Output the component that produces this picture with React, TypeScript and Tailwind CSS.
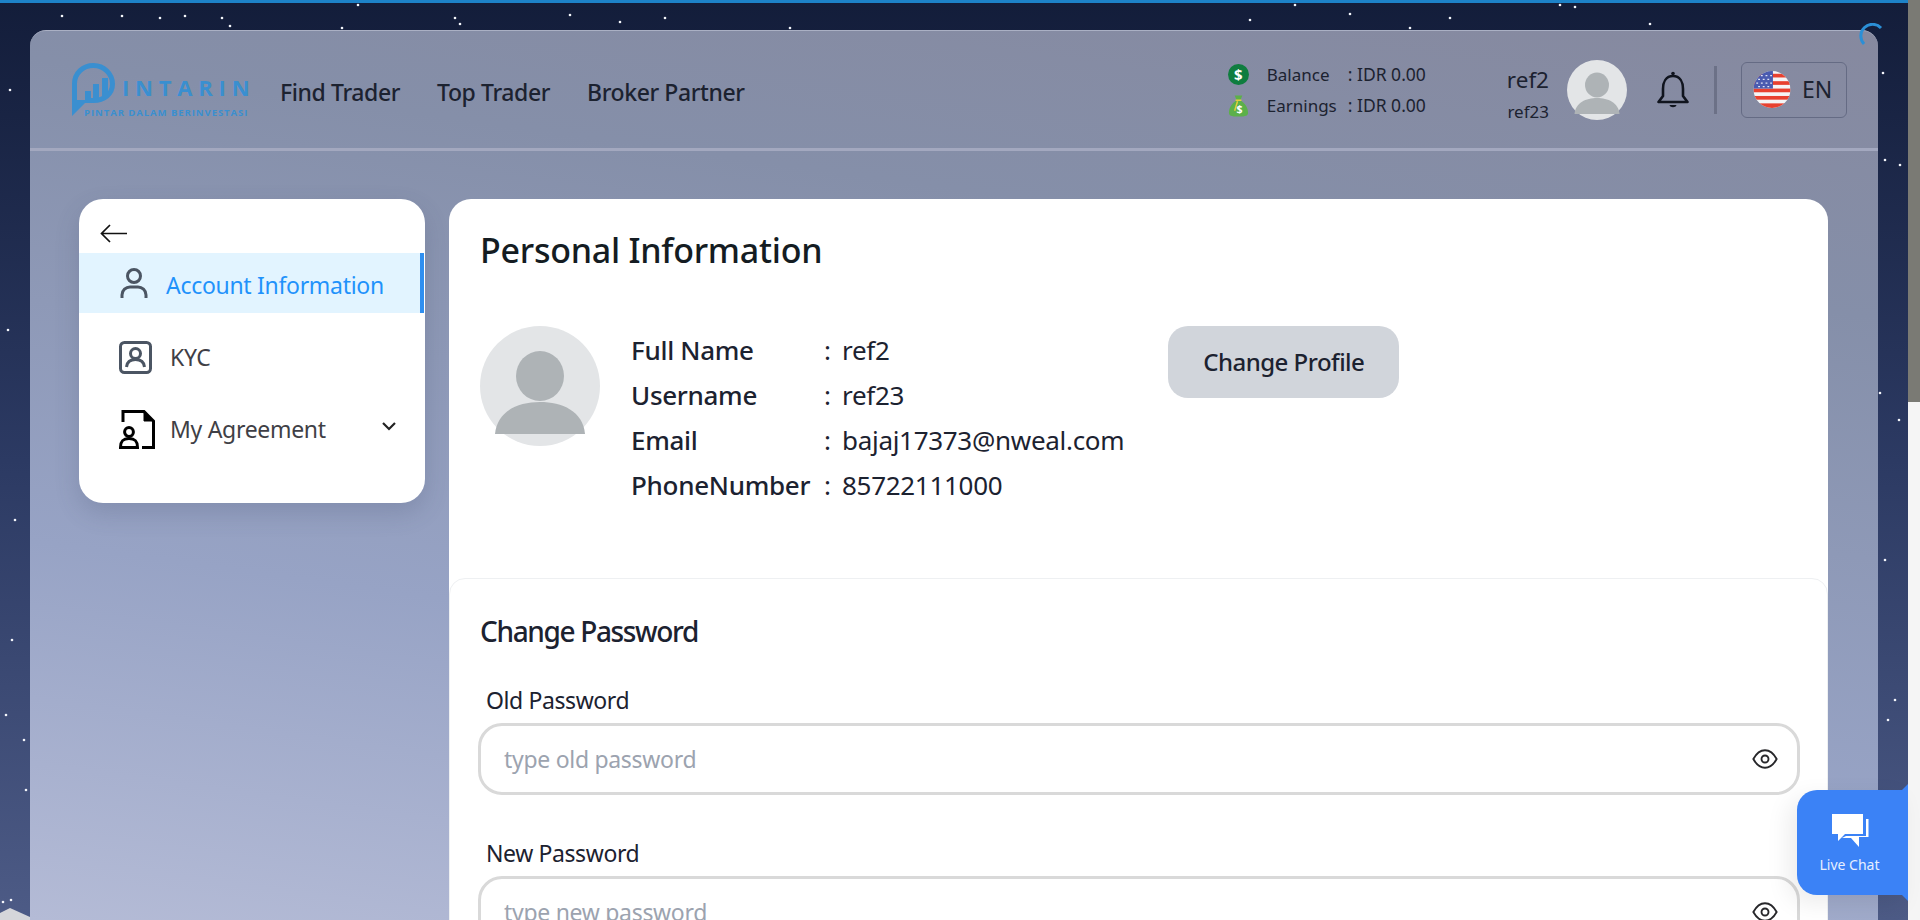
const stars = [
  [122, 16], [62, 16], [160, 18], [185, 16], [222, 18], [230, 26], [342, 28], [358, 5], [455, 18], [460, 24], [570, 15], [620, 22], [665, 18], [790, 28], [1250, 20], [1295, 5], [1350, 14], [1410, 28], [1450, 18], [1560, 5], [1575, 7], [1650, 24], [1850, 32], [1883, 73], [1885, 160], [1900, 165],
  [10, 90], [8, 330], [15, 520], [24, 740], [26, 790], [6, 715], [12, 640], [11, 900], [3, 902], [1880, 393], [1899, 420], [1885, 560], [1895, 700], [1888, 720],
];

function Flag() {
  return (
    <svg viewBox="0 0 40 40" className="h-[37px] w-[38px]">
      <defs>
        <clipPath id="flag-clip">
          <circle cx="20" cy="20" r="20" />
        </clipPath>
      </defs>
      <g clipPath="url(#flag-clip)">
        <rect width="40" height="40" fill="#f5f5f5" />
        <rect y="3" width="40" height="4" fill="#e8412f" />
        <rect y="11" width="40" height="4" fill="#e8412f" />
        <rect y="19" width="40" height="4" fill="#e8412f" />
        <rect y="27" width="40" height="4" fill="#e8412f" />
        <rect y="35" width="40" height="5" fill="#e8412f" />
        <rect width="21" height="19" fill="#4a5bb0" />
        <path d="M3 5h2M8 5h2M13 5h2M18 5h2M5 9h2M10 9h2M15 9h2M3 13h2M8 13h2M13 13h2M18 13h2M5 17h2M10 17h2M15 17h2" stroke="#dfe4f5" strokeWidth="1.4" />
      </g>
    </svg>
  );
}

function Avatar({ size }: { size: string }) {
  return (
    <svg viewBox="0 0 120 120" className={size}>
      <circle cx="60" cy="60" r="60" fill="#e3e5e7" />
      <ellipse cx="60" cy="50" rx="24" ry="25" fill="#aeb3b6" />
      <path d="M15 108 C17 85 38 76 60 76 C82 76 103 85 105 108 Z" fill="#aeb3b6" />
    </svg>
  );
}

function Logo() {
  return (
    <div className="relative h-[54px] w-[178px] font-['Open_Sans',sans-serif] text-[#3a8fd0]">
      <svg viewBox="0 0 46 54" className="absolute left-0 top-0 h-[54px] w-[46px]" fill="#3a8fd0">
        <path d="M2.500 46 V21 C2.500 10 11 2.500 21.500 2.500 C32 2.500 40.500 11 40.500 21 C40.500 31 32 37.500 21.500 37.500 H13" fill="none" stroke="#3a8fd0" strokeWidth="5" />
        <path d="M0 53 V24 H5 V37 H17 V40 H13 Z" />
        <rect x="13" y="28" width="6" height="7" />
        <rect x="21" y="21" width="6" height="14" />
        <rect x="30" y="15" width="6" height="20" />
      </svg>
      <span className="absolute left-[50px] top-[12px] text-[22px] font-bold leading-[24px] tracking-[5.800px]">INTARIN</span>
      <span className="absolute left-[12px] top-[44px] whitespace-nowrap text-[9.5px] font-bold leading-[11px] tracking-[0.95px]">PINTAR DALAM BERINVESTASI</span>
    </div>
  );
}

function Header() {
  return (
    <header className="flex h-[120px] items-center justify-between border-b-[3px] border-[#a3a8bf] pl-[42px] pr-[31px]">
      <div className="flex items-center">
        <Logo />
        <nav className="ml-[30px] mt-[5px] flex gap-[37px] text-[23px] font-medium tracking-[-0.4px] text-[#1c2230]">
          <a>Find Trader</a>
          <a>Top Trader</a>
          <a>Broker Partner</a>
        </nav>
      </div>
      <div className="flex items-center">
        <div className="flex flex-col gap-[9px] pt-[2px] text-[17px] leading-[21px] text-[#1c2230]">
          <div className="flex items-center">
            <span className="flex h-[21px] w-[21px] items-center justify-center rounded-full bg-[#0f7d3f] text-[15px] font-bold text-white">$</span>
            <span className="ml-[18px] w-[81px]">Balance</span>
            <span className="text-[17.5px]">: IDR 0.00</span>
          </div>
          <div className="flex items-center">
            <svg viewBox="0 0 22 24" className="h-[24px] w-[21px]">
              <path d="M7 1 L15 1 L13 6 C18 9 21 14 21 19 C21 22 19 23 11 23 C3 23 1 22 1 19 C1 14 4 9 9 6 Z" fill="#5cb04a" />
              <path d="M8 6 H14 M10 7 L7 17" stroke="#e5cf3c" strokeWidth="1.5" fill="none" />
              <text x="12" y="19" fontSize="11" fontWeight="700" textAnchor="middle" fill="#fff">$</text>
            </svg>
            <span className="ml-[18px] w-[81px]">Earnings</span>
            <span className="text-[17.5px]">: IDR 0.00</span>
          </div>
        </div>
        <div className="ml-[81px] flex flex-col items-end pt-[11px] text-[#1c2230]">
          <span className="text-[22.5px] leading-[34px]">ref2</span>
          <span className="text-[17px] leading-[30px]">ref23</span>
        </div>
        <Avatar size="ml-[18px] h-[60px] w-[60px]" />
        <svg viewBox="0 0 32 38" className="ml-[30px] h-[38px] w-[32px]" fill="none" stroke="#10141e" strokeWidth="2.600">
          <path d="M16 5 C9 5 6 11 6 18 V25 L1.500 31 H30.500 L26 25 V18 C26 11 23 5 16 5 Z" strokeLinejoin="round" />
          <circle cx="16" cy="2.500" r="1.800" fill="#10141e" strokeWidth="0" />
          <path d="M12.500 34 H19.500 C19 37 13 37 12.500 34 Z" fill="#10141e" strokeWidth="0" />
        </svg>
        <div className="ml-[25px] h-[48px] w-[3px] bg-[#6c7187]" />
        <div className="ml-[24px] flex h-[56px] w-[106px] items-center gap-[11px] rounded-[6px] border border-[#656b84] pl-[11px] text-[23px] text-[#1c2230]">
          <Flag />
          <span>EN</span>
        </div>
      </div>
    </header>
  );
}

function ChevronIcon() {
  return (
    <svg viewBox="0 0 14 9" className="ml-auto -mt-[6px] h-[9px] w-[14px]" fill="none" stroke="#222" strokeWidth="2.200">
      <path d="M1 1 L7 7 L13 1" />
    </svg>
  );
}

function Sidebar() {
  return (
    <aside className="h-[304px] w-[346px] shrink-0 rounded-[24px] bg-white pt-[25px] shadow-[0_10px_24px_rgba(60,70,100,0.2)]">
      <svg viewBox="0 0 27 19" className="mb-[10px] ml-[21px] h-[19px] w-[27px]" fill="none" stroke="#111" strokeWidth="1.700">
        <path d="M1.500 9.500 H27 M10 1 L1.500 9.500 L10 18" />
      </svg>
      <div className="mr-[1px] flex h-[60px] items-center border-r-[4px] border-[#2f8ff0] bg-[#e2f4ff] pl-[41px] text-[23px] tracking-[-0.3px] text-[#1f92fb]">
        <svg viewBox="0 0 28 32" className="h-[32px] w-[28px]" fill="none" stroke="#4b5563" strokeWidth="3">
          <circle cx="14" cy="9" r="6.500" />
          <path d="M2 31 V28 C2 23 6 20 10 20 H18 C22 20 26 23 26 28 V31" />
        </svg>
        <span className="ml-[18px] pt-[4px]">Account Information</span>
      </div>
      <div className="mt-[14px] flex h-[60px] items-center pl-[40px] text-[23px] tracking-[-0.3px] text-[#3f3f46]">
        <svg viewBox="0 0 33 33" className="h-[33px] w-[33px]" fill="none" stroke="#4b5563" strokeWidth="3">
          <rect x="1.500" y="1.500" width="30" height="30" rx="4" />
          <circle cx="16.500" cy="12.500" r="5" />
          <path d="M7.500 26 C8 21 11 18.500 16.500 18.500 C22 18.500 25 21 25.500 26" />
        </svg>
        <span className="ml-[18px]">KYC</span>
      </div>
      <div className="mt-[12px] flex h-[60px] items-center pl-[40px] pr-[29px] text-[23px] tracking-[-0.3px] text-[#3f3f46]">
        <svg viewBox="0 0 36 39" className="h-[39px] w-[36px]" fill="none" stroke="#000" strokeWidth="3">
          <path d="M4 12 V1.500 H25 L34.500 11 V37.500 H23" />
          <path d="M25 1.500 V11 H34.500" fill="#000" strokeWidth="1" />
          <circle cx="10" cy="22" r="4.400" />
          <path d="M1.500 37.500 C1.500 31 4 28.500 10 28.500 C16 28.500 18.500 31 18.500 37.500 Z" />
        </svg>
        <span className="ml-[15px]">My Agreement</span>
        <ChevronIcon />
      </div>
    </aside>
  );
}

function EyeIcon() {
  return (
    <svg viewBox="0 0 24 24" className="h-[28px] w-[28px]" fill="none" stroke="#27272a" strokeWidth="1.600" strokeLinecap="round" strokeLinejoin="round">
      <path d="M2 12 C5 6.500 8.500 4.500 12 4.500 C15.500 4.500 19 6.500 22 12 C19 17.500 15.500 19.500 12 19.500 C8.500 19.500 5 17.500 2 12 Z" />
      <circle cx="12" cy="12" r="3" />
    </svg>
  );
}

function DetailRow({ label, value }: { label: string; value: string }) {
  return (
    <div className="flex h-[45px] items-center text-[26px] tracking-[-0.3px] text-[#1c2230]">
      <span className="w-[193px] font-medium">{label}</span>
      <span className="w-[18px]">:</span>
      <span>{value}</span>
    </div>
  );
}

function PasswordField({ label, placeholder }: { label: string; placeholder: string }) {
  return (
    <div className="mb-[41px]">
      <label className="ml-[8px] block text-[23px] leading-[34px] tracking-[-0.4px] text-[#1c2230]">{label}</label>
      <div className="mt-[6px] flex h-[72px] items-center justify-between rounded-[24px] border-[3px] border-[#d9d9d9] pl-[23px] pr-[18px] text-[23px] tracking-[-0.3px] text-[#9ca3af]">
        <span>{placeholder}</span>
        <EyeIcon />
      </div>
    </div>
  );
}

function LiveChat() {
  return (
    <div className="absolute left-[1797px] top-[790px] flex h-[105px] w-[111px] flex-col items-center rounded-l-[20px] bg-[#3b82f6] pr-[6px] pt-[23px] text-[14px] text-[#e6efff] shadow-[-8px_8px_24px_rgba(0,0,0,0.08)]">
      <svg viewBox="0 0 38 34" className="h-[34px] w-[38px]" fill="#fff">
        <path d="M1 1 H32 V21 H14 L7 28 V21 H1 Z" />
        <path d="M35 6 H37.500 V24 H28 V34 L20 25 H11 L15 23 H35 Z" />
      </svg>
      <span className="mt-[7px]">Live Chat</span>
      <span className="absolute -top-[6px] right-0 h-0 w-0 border-b-[6px] border-l-[6px] border-b-[#3b82f6] border-l-transparent" />
      <span className="absolute -bottom-[6px] right-0 h-0 w-0 border-l-[6px] border-t-[6px] border-l-transparent border-t-[#3b82f6]" />
    </div>
  );
}

export default function App() {
  return (
    <div className="relative h-[920px] w-[1920px] overflow-hidden bg-gradient-to-b from-[#131d3a] via-[#2c3a63] to-[#4d5b86] font-['Noto_Sans',sans-serif]">
      <div className="absolute left-0 right-[12px] top-0 h-[3px] bg-[#1d82c8]" />
      <svg className="absolute inset-0 h-[920px] w-[1908px]">
        {stars.map(([x, y]) => (
          <circle key={`${x}-${y}`} cx={x} cy={y} r="1.300" fill="#f4f6fb" />
        ))}
        <path d="M0 913 L10 908 L30 917 V920 H0 Z" fill="#d5d6da" />
      </svg>

      <div className="absolute right-0 top-0 h-[920px] w-[12px] bg-[#f5f5f5]">
        <div className="h-[402px] w-[12px] bg-[#7a7a74]" />
      </div>

      <div className="relative ml-[30px] mr-[42px] mt-[30px] box-border h-[890px] rounded-t-[16px] border-t border-[#aab0c4] bg-[linear-gradient(8deg,#b4bbd6_0%,#97a3c5_33%,#858fa9_75%,#86899f_100%)]">
        <Header />
        <div className="flex gap-[24px] pl-[49px] pt-[48px]">
          <Sidebar />
          <main className="w-[1379px] rounded-t-[22px] bg-white text-[#1c2230]">
            <div className="h-[379px] px-[31px] pt-[27px]">
              <h1 className="text-[34px] font-medium leading-[48px] tracking-[-0.25px] text-[#141c22]">Personal Information</h1>
              <div className="mt-[52px] flex">
                <Avatar size="h-[120px] w-[120px]" />
                <div className="ml-[31px] mt-[2px]">
                  <DetailRow label="Full Name" value="ref2" />
                  <DetailRow label="Username" value="ref23" />
                  <DetailRow label="Email" value="bajaj17373@nweal.com" />
                  <DetailRow label="PhoneNumber" value="85722111000" />
                </div>
                <button className="ml-[44px] h-[72px] w-[231px] rounded-[20px] bg-[#d1d5db] text-[24px] font-medium tracking-[-0.5px]">Change Profile</button>
              </div>
            </div>
            <section className="rounded-t-[16px] border border-[#eef0f2] pl-[28px] pr-[27px] pt-[32px]">
              <h2 className="mb-[32px] ml-[2px] text-[28px] font-medium leading-[40px] tracking-[-1.35px]">Change Password</h2>
              <PasswordField label="Old Password" placeholder="type old password" />
              <PasswordField label="New Password" placeholder="type new password" />
            </section>
          </main>
        </div>
      </div>

      <svg viewBox="0 0 24 24" className="absolute left-[1859px] top-[23px] h-[24px] w-[24px]" fill="none" stroke="#2b8fd6" strokeWidth="3">
        <path d="M22 5 A10.500 10.500 0 0 0 5 21" />
      </svg>
      <LiveChat />
    </div>
  );
}
